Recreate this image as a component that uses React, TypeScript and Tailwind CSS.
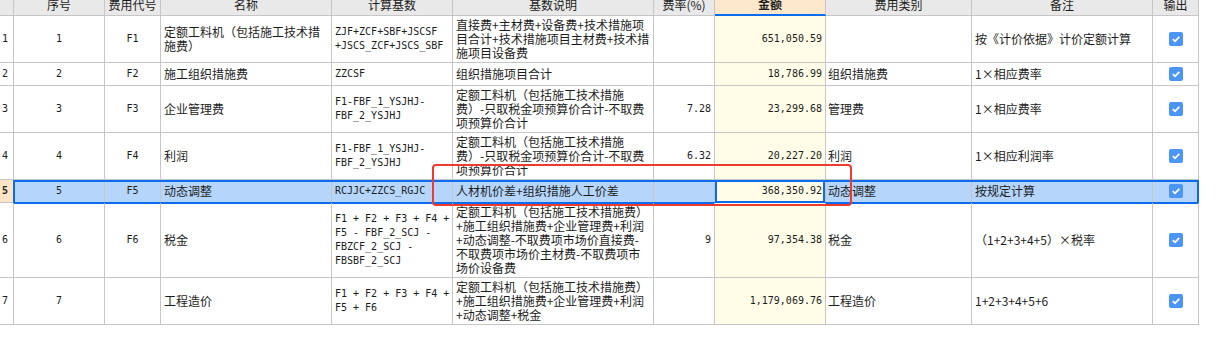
import React from 'react';

type Row = {
  n: number;
  code: string;
  name: string[];
  base: string[];
  desc: string[];
  rate: string;
  amount: string;
  kind: string;
  note: string;
  h: string;
  selected?: boolean;
};

const rows: Row[] = [
  {
    n: 1,
    code: 'F1',
    name: ['定额工料机（包括施工技术措', '施费）'],
    base: ['ZJF+ZCF+SBF+JSCSF', '+JSCS_ZCF+JSCS_SBF'],
    desc: ['直接费+主材费+设备费+技术措施项', '目合计+技术措施项目主材费+技术措', '施项目设备费'],
    rate: '',
    amount: '651,050.59',
    kind: '',
    note: '按《计价依据》计价定额计算',
    h: 'h-[47px]',
  },
  {
    n: 2,
    code: 'F2',
    name: ['施工组织措施费'],
    base: ['ZZCSF'],
    desc: ['组织措施项目合计'],
    rate: '',
    amount: '18,786.99',
    kind: '组织措施费',
    note: '1×相应费率',
    h: 'h-[23px]',
  },
  {
    n: 3,
    code: 'F3',
    name: ['企业管理费'],
    base: ['F1-FBF_1_YSJHJ-', 'FBF_2_YSJHJ'],
    desc: ['定额工料机（包括施工技术措施', '费）-只取税金项预算价合计-不取费', '项预算价合计'],
    rate: '7.28',
    amount: '23,299.68',
    kind: '管理费',
    note: '1×相应费率',
    h: 'h-[47px]',
  },
  {
    n: 4,
    code: 'F4',
    name: ['利润'],
    base: ['F1-FBF_1_YSJHJ-', 'FBF_2_YSJHJ'],
    desc: ['定额工料机（包括施工技术措施', '费）-只取税金项预算价合计-不取费', '项预算价合计'],
    rate: '6.32',
    amount: '20,227.20',
    kind: '利润',
    note: '1×相应利润率',
    h: 'h-[47px]',
  },
  {
    n: 5,
    code: 'F5',
    name: ['动态调整'],
    base: ['RCJJC+ZZCS_RGJC'],
    desc: ['人材机价差+组织措施人工价差'],
    rate: '',
    amount: '368,350.92',
    kind: '动态调整',
    note: '按规定计算',
    h: 'h-[23px]',
    selected: true,
  },
  {
    n: 6,
    code: 'F6',
    name: ['税金'],
    base: ['F1 + F2 + F3 + F4 +', 'F5 - FBF_2_SCJ -', 'FBZCF_2_SCJ -', 'FBSBF_2_SCJ'],
    desc: [
      '定额工料机（包括施工技术措施费）',
      '+施工组织措施费+企业管理费+利润',
      '+动态调整-不取费项市场价直接费-',
      '不取费项市场价主材费-不取费项市',
      '场价设备费',
    ],
    rate: '9',
    amount: '97,354.38',
    kind: '税金',
    note: '（1+2+3+4+5）×税率',
    h: 'h-[75px]',
  },
  {
    n: 7,
    code: '',
    name: ['工程造价'],
    base: ['F1 + F2 + F3 + F4 +', 'F5 + F6'],
    desc: ['定额工料机（包括施工技术措施费）', '+施工组织措施费+企业管理费+利润', '+动态调整+税金'],
    rate: '',
    amount: '1,179,069.76',
    kind: '工程造价',
    note: '1+2+3+4+5+6',
    h: 'h-[47px]',
  },
];

const cols =
  'grid grid-cols-[14px_91px_56px_171px_121px_201px_61px_111px_146px_181px_46px] w-[1199px]';
const cell = 'border-r border-b border-[#c6c6c6] flex items-center overflow-hidden';
const cjk = "font-['Noto_Sans_CJK_SC',sans-serif] text-[12px] leading-[14px]";
const mono = "font-['DejaVu_Sans_Mono',monospace] text-[10px] leading-[14px]";

const Lines = ({ lines }: { lines: string[] }) => (
  <div className="whitespace-nowrap">
    {lines.map((l, i) => (
      <div key={i}>{l}</div>
    ))}
  </div>
);

const Check = () => (
  <div className="w-[14px] h-[14px] rounded-[2px] bg-[#4a95f5] flex items-center justify-center">
    <svg width="10" height="10" viewBox="0 0 10 10">
      <path d="M1.8 5.2 L4 7.3 L8.3 2.8" stroke="white" strokeWidth="1.8" fill="none" />
    </svg>
  </div>
);

const headers = ['序号', '费用代号', '名称', '计算基数', '基数说明', '费率(%)', '金额', '费用类别', '备注', '输出'];

const App: React.FC = () => {
  return (
    <div className="relative w-[1231px] h-[351px] bg-white overflow-hidden text-[#1c1c1c]">
      <div className="-mt-[6px]">
        <div className={`${cols} h-[22px] bg-[#e9e9e9] ${cjk}`}>
          <div className={cell} />
          {headers.map((h) =>
            h === '金额' ? (
              <div
                key={h}
                className="border-r border-[#c6c6c6] border-b-2 border-b-[#0b6cf0] bg-[#fde8cb] flex items-center justify-center font-bold"
              >
                {h}
              </div>
            ) : (
              <div key={h} className={`${cell} justify-center`}>
                {h}
              </div>
            )
          )}
        </div>

        {rows.map((r) => (
          <div key={r.n} className={`relative ${cols} ${r.h} ${r.selected ? 'bg-[#b5d5fb]' : ''}`}>
            <div
              className={`${cell} ${mono} pl-[2px] ${r.selected ? 'bg-[#fde4c4] font-bold' : 'bg-white'}`}
            >
              {r.n}
            </div>
            <div className={`${cell} ${mono} justify-center`}>{r.n}</div>
            <div className={`${cell} ${mono} justify-center`}>{r.code}</div>
            <div className={`${cell} ${cjk} pl-[3px]`}>
              <Lines lines={r.name} />
            </div>
            <div className={`${cell} ${mono} pl-[3px]`}>
              <Lines lines={r.base} />
            </div>
            <div className={`${cell} ${cjk} pl-[3px]`}>
              <Lines lines={r.desc} />
            </div>
            <div className={`${cell} ${mono} justify-end pr-[3px]`}>{r.rate}</div>
            <div className={`${cell} ${mono} justify-end pr-[3px] bg-[#fffde8] relative`}>
              {r.amount}
              {r.selected && (
                <div className="absolute inset-0 -bottom-px border-2 border-[#0b6cf0] pointer-events-none" />
              )}
            </div>
            <div className={`${cell} ${cjk} pl-[2px]`}>{r.kind}</div>
            <div className={`${cell} ${cjk} pl-[3px]`}>{r.note}</div>
            <div className={`${cell} justify-center`}>
              <Check />
            </div>
            {r.selected && (
              <div className="absolute left-[13px] right-0 top-0 -bottom-px border-2 border-[#0b6cf0] pointer-events-none" />
            )}
          </div>
        ))}
      </div>

      <div className="absolute left-[432px] top-[164px] w-[420px] h-[42px] border-2 border-[#ee3b30] rounded-[4px] pointer-events-none" />
    </div>
  );
};

export default App;
